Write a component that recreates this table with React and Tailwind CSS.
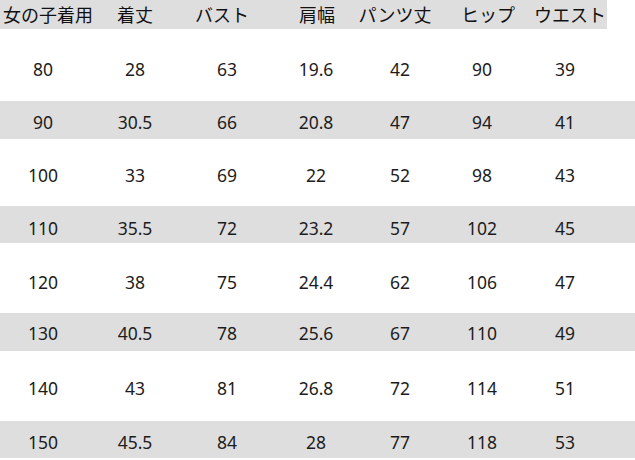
import React from 'react';

const headers = ['女の子着用', '着丈', 'バスト', '肩幅', 'パンツ丈', 'ヒップ', 'ウエスト'];

// [values, row height, top padding, striped]
const rows = [
  [['80', '28', '63', '19.6', '42', '90', '39'], 'h-[72px] pt-[10px]', false],
  [['90', '30.5', '66', '20.8', '47', '94', '41'], 'h-[38px] pt-[6px]', true],
  [['100', '33', '69', '22', '52', '98', '43'], 'h-[67px] pt-[6px]', false],
  [['110', '35.5', '72', '23.2', '57', '102', '45'], 'h-[37px] pt-[8px]', true],
  [['120', '38', '75', '24.4', '62', '106', '47'], 'h-[70px] pt-[10px]', false],
  [['130', '40.5', '78', '25.6', '67', '110', '49'], 'h-[38px] pt-[4px]', true],
  [['140', '43', '81', '26.8', '72', '114', '51'], 'h-[70px] pt-[6px]', false],
  [['150', '45.5', '84', '28', '77', '118', '53'], 'h-[37px] pt-[7px]', true],
];

export default function App() {
  return (
    <div
      className="h-[460px] w-[635px] overflow-hidden bg-white text-[#1c1c1c]"
      style={{ fontFamily: '"Noto Sans", "Noto Sans CJK JP", sans-serif' }}
    >
      <div className="grid h-[29px] w-[607px] grid-cols-[96px_78px_96px_94px_62px_124px_40px] items-center bg-[#dedede] text-[18px] leading-none text-[#111]">
        {headers.map((h) => (
          <div key={h} className="flex justify-center whitespace-nowrap">
            {h}
          </div>
        ))}
      </div>

      {rows.map(([vals, size, striped], i) => (
        <div
          key={i}
          className={`grid grid-cols-[86px_98px_86px_92px_76px_88px_78px] items-center text-[17.5px] leading-none ${size} ${
            striped ? 'bg-[#dedede]' : 'bg-white'
          }`}
        >
          {vals.map((v, j) => (
            <div key={j} className="flex justify-center whitespace-nowrap">
              {v}
            </div>
          ))}
        </div>
      ))}
    </div>
  );
}
